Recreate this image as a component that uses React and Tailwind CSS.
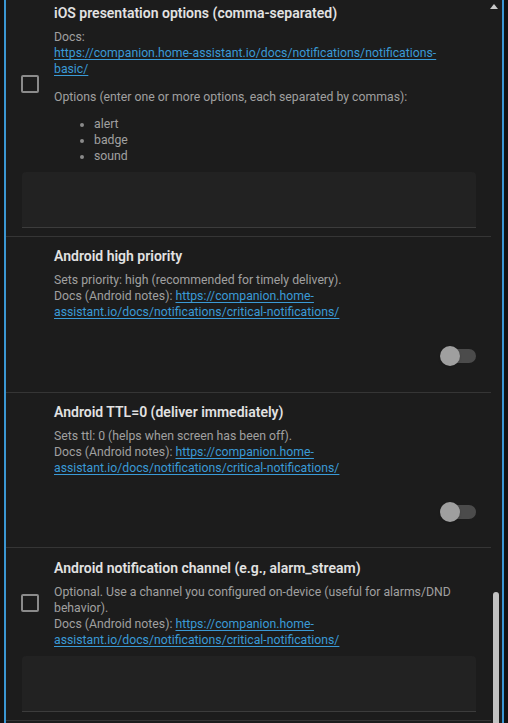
import React from "react";

const LINK = "text-[#3a9ad6] underline underline-offset-2";

const Checkbox = () => (
  <div className="w-[18px] h-[18px] shrink-0 rounded-[2px] border-2 border-[#8b8b8b]" />
);

const Toggle = () => (
  <div className="relative w-[36px] h-[20px] flex items-center">
    <div className="ml-[2px] w-[34px] h-[14px] rounded-full bg-[#4b4b4b]" />
    <div className="absolute left-0 top-0 w-5 h-5 rounded-full bg-[#9f9f9f] shadow" />
  </div>
);

const InputBox = () => (
  <div className="ml-[1px] mt-[8px] h-[56px] rounded-t-[4px] bg-[#222222] border-b border-[#3c3c3c]" />
);

const Title = ({ children }) => (
  <div className="text-[14px] leading-[20px] font-semibold text-[#e2e2e2]">{children}</div>
);

const CriticalDocs = () => (
  <>
    Docs (Android notes):{" "}
    <a className={LINK}>
      https://companion.home-
      <br />
      assistant.io/docs/notifications/critical-notifications/
    </a>
  </>
);

const ToggleRow = ({ title, desc, toggleArea }) => (
  <div className="border-b border-[#353535] pl-[48px] pr-[15px] pt-[9px]">
    <Title>{title}</Title>
    <div className="mt-[6px] text-[12.25px] leading-[16px] text-[#a0a0a0]">
      {desc}
      <br />
      <CriticalDocs />
    </div>
    <div className={`flex items-center justify-end ${toggleArea}`}>
      <Toggle />
    </div>
  </div>
);

export default function App() {
  return (
    <div
      className="w-full h-[723px] bg-[#121212] px-[4px] overflow-hidden"
      style={{ fontFamily: "Roboto, 'Noto Sans', sans-serif" }}
    >
      <div className="relative h-full border-x-2 border-[#3b97d3] bg-[#1c1c1c] overflow-hidden">
        <div className="mr-[11px]">
          {/* iOS presentation options */}
          <div className="border-b border-[#353535] pl-[15px] pr-[15px] pt-[3px] pb-[8px]">
            <div className="flex items-center gap-[15px]">
              <Checkbox />
              <div>
                <Title>iOS presentation options (comma-separated)</Title>
                <div className="mt-[6px] text-[12.25px] leading-[16px] text-[#a0a0a0]">
                  <p>
                    Docs:
                    <br />
                    <a className={LINK}>
                      https://companion.home-assistant.io/docs/notifications/notifications-
                      <br />
                      basic/
                    </a>
                  </p>
                  <p className="mt-[12px]">
                    Options (enter one or more options, each separated by commas):
                  </p>
                  <ul className="mt-[11px] pl-[40px] list-disc marker:text-[#8a8a8a]">
                    <li>alert</li>
                    <li>badge</li>
                    <li>sound</li>
                  </ul>
                </div>
              </div>
            </div>
            <InputBox />
          </div>

          <ToggleRow
            title="Android high priority"
            desc="Sets priority: high (recommended for timely delivery)."
            toggleArea="h-[72px]"
          />
          <ToggleRow
            title="Android TTL=0 (deliver immediately)"
            desc="Sets ttl: 0 (helps when screen has been off)."
            toggleArea="h-[71px]"
          />

          {/* Android notification channel */}
          <div className="border-b border-[#353535] pl-[15px] pr-[15px] pt-[10px] pb-[8px]">
            <div className="flex items-center gap-[15px]">
              <Checkbox />
              <div>
                <Title>Android notification channel (e.g., alarm_stream)</Title>
                <div className="mt-[6px] text-[12.25px] leading-[16px] text-[#a0a0a0]">
                  Optional. Use a channel you configured on-device (useful for alarms/DND
                  <br />
                  behavior).
                  <br />
                  <CriticalDocs />
                </div>
              </div>
            </div>
            <InputBox />
          </div>
        </div>

        {/* scrollbar */}
        <div className="absolute right-[4px] top-[4px] w-0 h-0 border-x-[4px] border-x-transparent border-b-[5px] border-b-[#c8c8c8]" />
        <div className="absolute right-[3px] top-[592px] w-[6px] h-[160px] rounded-full bg-[#c2c2c2]" />
      </div>
    </div>
  );
}
